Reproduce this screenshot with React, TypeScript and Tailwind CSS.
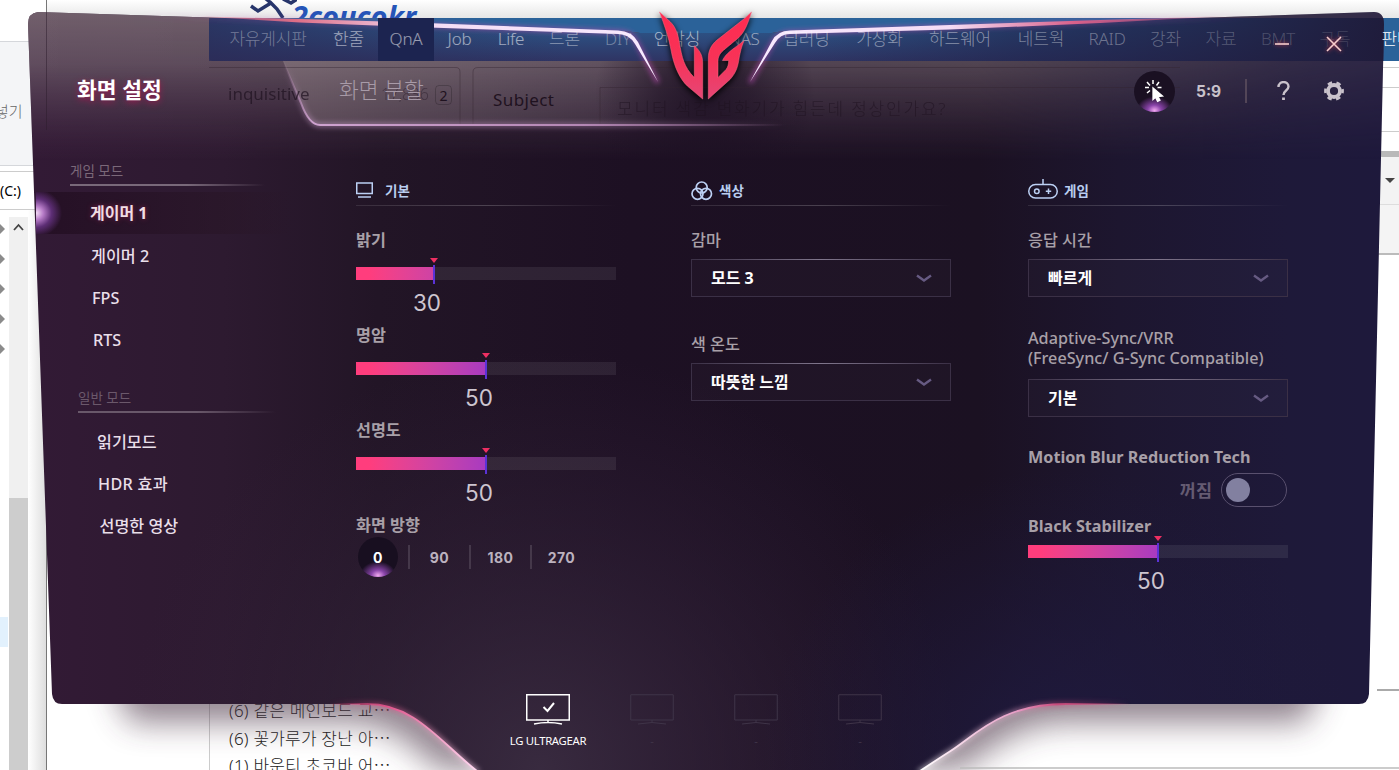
import clsx from 'clsx'
import { ReactNode } from 'react'

const NAV_ITEMS = [
  { label: '자유게시판', className: 'w-[118px] text-white/35' },
  { label: '한줄', className: 'w-[43px] text-white/55' },
  { label: 'QnA', className: 'ml-[8px] w-[56px] bg-[#1c2450] text-white/55' },
  { label: 'Job', className: 'w-[51px] text-white/55' },
  { label: 'Life', className: 'w-[52px] text-white/55' },
  { label: '드론', className: 'w-[55px] text-white/45' },
  { label: 'DIY', className: 'w-[52px] text-white/35' },
  { label: '언박싱', className: 'w-[66px] text-white/60' },
  { label: 'NAS', className: 'w-[68px] text-white/50' },
  { label: '딥러닝', className: 'w-[57px] text-white/45' },
  { label: '가상화', className: 'w-[89px] text-white/45' },
  { label: '하드웨어', className: 'w-[72px] text-white/45' },
  { label: '네트웍', className: 'w-[90px] text-white/40' },
  { label: 'RAID', className: 'w-[42px] text-white/35' },
  { label: '강좌', className: 'w-[75px] text-white/30' },
  { label: '자료', className: 'w-[36px] text-white/25' },
  { label: 'BMT', className: 'w-[78px] text-white/20' },
  { label: '구독', className: 'w-[36px] text-white/15' },
  { label: '판매', className: 'ml-[13px] w-[62px] text-white' },
]

const POSTS = ['(6) 같은 메인보드 교⋯', '(6) 꽃가루가 장난 아⋯', '(1) 바운티 초코바 어⋯']

const PANEL_PATH =
  'M38 12 L209 17.5 L615 31 Q629 31 640 33 L772 33 Q780 31 790 31 L1209 17.5 L1374 12 Q1384 12 1384 24 L1369 694 Q1368 704 1359 704 L1066 704 C1000 704 975 736 949 752 Q935 761 920 771 L477 771 C440 742 415 704 367 704 L62 704 Q53 704 52 694 L28 24 Q28 13 38 12 Z'

function Backdrop() {
  return (
    <>
      <div className="absolute inset-y-0 left-0 w-[46px] overflow-hidden bg-white text-black">
        <div className="h-[41px]" />
        <div className="flex h-[125px] items-center border-y border-[#d5d7db] bg-[#f4f5f7] pt-4 text-[15px] font-light text-[#666]">
          <span className="-ml-[5px]">넣기</span>
        </div>
        <div className="mt-[5px] flex h-[39px] items-center border-y border-[#ccc] text-[14px]">(C:)</div>
        <div className="flex">
          <div className="flex w-[9px] flex-col gap-[20px] pt-[14px]">
            {[1, 2, 3, 4, 5].map((row) => (
              <span key={row} className="h-[10px] w-0 border-y-[5px] border-l-[5px] border-y-transparent border-l-[#8b8b8b]" />
            ))}
          </div>
          <div className="mt-[7px] h-[560px] w-[19px] bg-[#f0f0f0]">
            <svg viewBox="0 0 19 20" className="h-5 w-[19px]" fill="none" stroke="#444" strokeWidth="1.8">
              <path d="M5 13 L9.500 8 L14 13" />
            </svg>
            <div className="mt-[261px] h-[280px] bg-[#cdcdcd]" />
          </div>
          <div className="h-[570px] flex-1 bg-linear-to-r from-white to-[#dedede]" />
        </div>
        <div className="absolute top-[617px] left-0 h-[30px] w-2 bg-[#e2f1fd]" />
      </div>

      <div className="absolute inset-y-0 right-0 left-[46px] overflow-hidden border-l border-[#777] bg-white">
        <div className="relative h-[18px] overflow-hidden bg-linear-to-b from-white to-[#e6e6e6]">
          <svg viewBox="0 0 50 18" className="absolute left-[200px] h-[18px] w-[50px]" fill="none" stroke="#27356b" strokeWidth="3.500">
            <path d="M4 6 L11 11 L24 3 L30 9 L36 18 M18 -2 L24 3 M36 -1 L44 3 L52 -2" />
          </svg>
          <span className="absolute top-[1px] left-[245px] text-[29px] leading-[30px] font-bold text-[#2554b8] italic">
            2coucokr
          </span>
        </div>
        <div className="ml-[162px] h-[43px] rounded-l bg-[#2b6299]" />
        <div className="ml-auto flex w-[22px] flex-col">
          <div className="h-[7px] border-b border-[#ccc]" />
          <div className="h-5 border-b border-[#ccc]" />
          <div className="h-11 border-b border-[#ccc]" />
          <div className="h-[19px]" />
          <div className="h-[6px] bg-[#b9b9b9]" />
          <div className="flex h-[48px] items-center justify-end border-b border-[#ddd] bg-[#f3f3f3] pr-[4px]">
            <span className="w-[10px] border-x-[5px] border-t-[5px] border-x-transparent border-t-[#444]" />
          </div>
          <div className="h-[50px] border-b-2 border-[#bbb] bg-[#f4f4f4]" />
          <div className="h-[434px]" />
          <div className="h-[2px] bg-[#aaa]" />
        </div>
      </div>
    </>
  )
}

function PostList() {
  return (
    <div className="absolute top-[697px] left-[209px] h-[73px] w-[252px] overflow-hidden border-l border-[#ccc] pl-[19px] text-[17px] leading-[27.500px] font-light tracking-[0.2px] whitespace-nowrap text-[#222]">
      {POSTS.map((post) => (
        <p key={post}>{post}</p>
      ))}
    </div>
  )
}

function PanelShadow() {
  return (
    <svg viewBox="0 0 1399 770" className="absolute inset-0 h-full w-full" fill="none">
      <defs>
        <filter id="soft" x="-20%" y="-50%" width="140%" height="200%">
          <feGaussianBlur stdDeviation="16" />
        </filter>
      </defs>
      <path d="M110 670 H400 L500 770 H440 C410 740 390 724 350 722 H130 Z" fill="#4b3446" opacity=".62" filter="url(#soft)" />
      <path d="M1325 670 H1000 L900 770 H960 C1000 740 1020 726 1060 722 H1305 Z" fill="#4b3446" opacity=".62" filter="url(#soft)" />
      <path d="M960 768 H1399" stroke="#bbb" strokeWidth="1.500" />
    </svg>
  )
}

function PanelShape() {
  return (
    <svg viewBox="0 0 1399 770" className="absolute inset-0 h-full w-full" fill="none">
      <defs>
        <linearGradient id="base">
          <stop offset="0" stopColor="#331a36" />
          <stop offset=".16" stopColor="#2d1a30" />
          <stop offset=".27" stopColor="#221526" />
          <stop offset=".45" stopColor="#1d1023" />
          <stop offset=".7" stopColor="#1b1122" />
          <stop offset=".8" stopColor="#1d162f" />
          <stop offset=".92" stopColor="#1e1939" />
          <stop offset="1" stopColor="#1e193c" />
        </linearGradient>
        <linearGradient id="haze" x1="0" y1="12" x2="0" y2="160" gradientUnits="userSpaceOnUse">
          <stop offset="0" stopColor="#84747c" stopOpacity=".78" />
          <stop offset=".35" stopColor="#82727c" stopOpacity=".58" />
          <stop offset=".7" stopColor="#705a6c" stopOpacity=".27" />
          <stop offset="1" stopColor="#5a3c57" stopOpacity="0" />
        </linearGradient>
        <linearGradient id="fade-x">
          <stop offset="0" stopColor="#fff" />
          <stop offset=".7" stopColor="#fff" stopOpacity=".9" />
          <stop offset=".92" stopColor="#fff" stopOpacity=".35" />
          <stop offset="1" stopColor="#fff" stopOpacity=".25" />
        </linearGradient>
        <mask id="haze-mask">
          <rect width="1399" height="770" fill="url(#fade-x)" />
        </mask>
        <radialGradient id="notch-shade" cx="705" cy="95" r="110" gradientUnits="userSpaceOnUse">
          <stop offset="0" stopColor="#1d1023" stopOpacity=".85" />
          <stop offset=".4" stopColor="#1d1023" stopOpacity=".6" />
          <stop offset="1" stopColor="#1d1023" stopOpacity="0" />
        </radialGradient>
        <radialGradient id="floor" cx="540" cy="770" r="420" gradientUnits="userSpaceOnUse">
          <stop offset="0" stopColor="#3b2d42" stopOpacity=".9" />
          <stop offset="1" stopColor="#33203a" stopOpacity="0" />
        </radialGradient>
        <radialGradient id="floor-right" cx="1060" cy="770" r="300" gradientUnits="userSpaceOnUse">
          <stop offset="0" stopColor="#1f1a3f" />
          <stop offset="1" stopColor="#1f1a3f" stopOpacity="0" />
        </radialGradient>
        <linearGradient id="nav" x1="0" y1="18" x2="0" y2="61" gradientUnits="userSpaceOnUse">
          <stop offset="0" stopColor="#2b5f93" />
          <stop offset="1" stopColor="#2f3463" />
        </linearGradient>
        <linearGradient id="nav-shade">
          <stop offset="0" stopColor="#2a2a55" stopOpacity=".75" />
          <stop offset=".3" stopColor="#2a2a55" stopOpacity="0" />
          <stop offset=".5" stopColor="#1f234a" stopOpacity="0" />
          <stop offset=".7" stopColor="#1f234a" stopOpacity=".65" />
          <stop offset="1" stopColor="#1f1b3a" />
        </linearGradient>
        <linearGradient id="tab" x1="283" y1="0" x2="800" y2="0" gradientUnits="userSpaceOnUse">
          <stop offset="0" stopColor="#b0a0a0" stopOpacity=".34" />
          <stop offset=".6" stopColor="#b0a0a8" stopOpacity=".14" />
          <stop offset="1" stopColor="#b09aa8" stopOpacity="0" />
        </linearGradient>
        <linearGradient id="tab-line" x1="283" y1="61" x2="785" y2="61" gradientUnits="userSpaceOnUse">
          <stop offset="0" stopColor="#c79ac6" stopOpacity="0" />
          <stop offset=".06" stopColor="#cfa3d0" />
          <stop offset=".6" stopColor="#b487b4" />
          <stop offset="1" stopColor="#b487b4" stopOpacity="0" />
        </linearGradient>
        <linearGradient id="edge-left" x1="140" y1="0" x2="660" y2="0" gradientUnits="userSpaceOnUse">
          <stop offset="0" stopColor="#e0648a" stopOpacity="0" />
          <stop offset=".3" stopColor="#dd6e86" />
          <stop offset=".55" stopColor="#f4dcf5" />
          <stop offset="1" stopColor="#f7eaff" />
        </linearGradient>
        <linearGradient id="edge-right" x1="750" y1="0" x2="1250" y2="0" gradientUnits="userSpaceOnUse">
          <stop offset="0" stopColor="#f7eaff" />
          <stop offset=".4" stopColor="#f4dcf5" />
          <stop offset=".65" stopColor="#d9608a" />
          <stop offset="1" stopColor="#d9608a" stopOpacity="0" />
        </linearGradient>
        <linearGradient id="edge-glow" x1="140" y1="0" x2="1250" y2="0" gradientUnits="userSpaceOnUse">
          <stop offset="0" stopColor="#b04aa8" stopOpacity="0" />
          <stop offset=".3" stopColor="#b04aa8" stopOpacity=".6" />
          <stop offset=".75" stopColor="#b04aa8" stopOpacity=".6" />
          <stop offset="1" stopColor="#b04aa8" stopOpacity="0" />
        </linearGradient>
        <linearGradient id="curve-left" x1="330" y1="0" x2="477" y2="0" gradientUnits="userSpaceOnUse">
          <stop offset="0" stopColor="#d8326e" stopOpacity="0" />
          <stop offset=".4" stopColor="#e0568c" />
          <stop offset="1" stopColor="#ffd9f2" />
        </linearGradient>
        <linearGradient id="curve-right" x1="920" y1="0" x2="1130" y2="0" gradientUnits="userSpaceOnUse">
          <stop offset="0" stopColor="#fff" />
          <stop offset=".45" stopColor="#e8a0c8" />
          <stop offset=".65" stopColor="#c94b7c" />
          <stop offset="1" stopColor="#c94b7c" stopOpacity="0" />
        </linearGradient>
        <filter id="glow" x="-10%" y="-60%" width="120%" height="220%">
          <feGaussianBlur stdDeviation="2.500" />
        </filter>
        <clipPath id="panel-clip">
          <path d={PANEL_PATH} />
        </clipPath>
      </defs>

      <g clipPath="url(#panel-clip)">
        <rect width="1399" height="770" fill="url(#base)" />
        <rect width="1399" height="770" fill="url(#floor)" />
        <rect width="1399" height="770" fill="url(#floor-right)" />
        <rect width="1399" height="200" fill="url(#haze)" mask="url(#haze-mask)" />
        <path d="M46.500 0 V130" stroke="#2b1c2b" strokeOpacity=".5" />
        <path d="M283 61 L301 103 Q309 125 320 125 H800 V61 Z" fill="url(#tab)" />
        <rect x="560" y="61" width="300" height="150" fill="url(#notch-shade)" />
        <path d="M213 18 H1399 V61 H213 Q209 61 209 57 V22 Q209 18 213 18" fill="url(#nav)" />
        <rect x="209" y="18" width="1190" height="43" fill="url(#nav-shade)" />
        <path d="M209 67.500 H455 Q460 67 460 72 V124 M473 124 V72 Q473 67.500 478 67.500 H1180 M600 124 V87.500 H1180" stroke="#33222f" strokeOpacity=".4" />
      </g>

      <g strokeLinecap="round">
        <path d="M283 61 L301 103 Q309 125 320 125 L785 125.010" stroke="url(#tab-line)" strokeWidth="5" opacity=".5" filter="url(#glow)" />
        <path d="M283 61 L301 103 Q309 125 320 125 L785 125.010" stroke="url(#tab-line)" strokeWidth="2" />
        <path d="M140 15.500 L620 32 Q631 32 636 41 L657 81" stroke="url(#edge-glow)" strokeWidth="5" filter="url(#glow)" />
        <path d="M200 16.500 L300 19 L400 22 L618 30.500 Q632 31 638 42 L658 82 L635 44 Q629 34 618 34 L400 26.500 L300 22.500 Z" fill="url(#edge-left)" />
        <path d="M1250 16.500 L790 32.500 Q779 33 773 42 L751 81" stroke="url(#edge-glow)" strokeWidth="5" filter="url(#glow)" />
        <path d="M1230 16 L1100 20 L950 25 L790 30.500 Q777 31 772 41 L750 82 L775 43 Q780 34 790 34 L950 29.500 L1100 23 Z" fill="url(#edge-right)" />
        <path d="M330 704 L367 704 C415 704 440 742 477 771" stroke="url(#curve-left)" strokeWidth="5" opacity=".5" filter="url(#glow)" />
        <path d="M330 703.990 L367 704 C415 704 440 742 477 771" stroke="url(#curve-left)" strokeWidth="1.800" />
        <path d="M1130 704 L1066 704 C1000 704 975 736 949 752 Q935 761 920 771" stroke="url(#curve-right)" strokeWidth="5" opacity=".5" filter="url(#glow)" />
        <path d="M1130 703.990 L1066 704 C1000 704 975 736 949 752 Q935 761 920 771" stroke="url(#curve-right)" strokeWidth="1.800" />
      </g>
    </svg>
  )
}

function PageBehind() {
  return (
    <div className="absolute top-[18px] left-[209px] w-[1190px] overflow-hidden font-light whitespace-nowrap">
      <nav className="flex h-[43px] text-[17px] leading-[41px]">
        {NAV_ITEMS.map((item) => (
          <span key={item.label} className={clsx('flex h-full shrink-0 justify-center tracking-[-0.2px]', item.className)}>
            {item.label}
          </span>
        ))}
      </nav>
      <div className="flex h-[95px] pt-[21px] pl-[19px] text-[17px] text-[#1f1220]">
        <span className="w-[153px] leading-6 font-normal opacity-70">inquisitive</span>
        <span className="w-[54px] text-[16px] leading-6 tracking-[-0.3px] opacity-40">17,836</span>
        <span className="mt-[3px] h-5 w-[17px] rounded border border-black/20 text-center text-[14px] leading-[19px] font-normal">2</span>
        <span className="ml-[41px] w-[124px] pt-[4px] leading-7 font-normal tracking-[0.4px]">Subject</span>
        <span className="pt-[13px] leading-7 tracking-[1.800px] opacity-60">모니터 색감 변화기가 힘든데 정상인가요?</span>
      </div>
    </div>
  )
}

function UltraGearLogo() {
  return (
    <svg viewBox="0 0 96 96" className="absolute top-[10px] left-[657px] h-24 w-24 drop-shadow-[0_2px_3px_#000]">
      <defs>
        <linearGradient id="logo" x1="0" y1="0" x2="0" y2="96" gradientUnits="userSpaceOnUse">
          <stop offset="0" stopColor="#ff2b50" />
          <stop offset=".5" stopColor="#f83257" />
          <stop offset="1" stopColor="#e24a7c" />
        </linearGradient>
      </defs>
      <g fill="url(#logo)" stroke="#ff6d86" strokeWidth=".5">
        <path d="M2.500 2 L13 11.500 C19 17 21 25 22.300 32 C25 48 27 57 37.300 67.500 L37.300 35.700 C42 40 45.700 44 45.700 53 L45.700 89 L30.300 76 C23 69 17 57 14 40 C12 28 7 14 2.500 2 Z" />
        <path d="M94.500 2 C91 13 88 22 81.300 28 L66.300 40.500 C62.500 44 61 47 61 51.700 L61 67.500 L69 59.500 C71 57 71.500 54 71.700 50.500 L65.500 50.500 C69 43 75 40 87 30.700 C84 38 83.500 42 82.300 47 C81 56 79.700 62 73 69.500 L51.300 89 L51.300 48 C51.300 41 54 35 60 30 L88.700 7.500 Z" />
      </g>
    </svg>
  )
}

function SectionTitle({ icon, children }: { icon: ReactNode; children: ReactNode }) {
  return (
    <div className="flex h-[26px] flex-col">
      <div className="flex h-[25px] items-center pb-[4px] text-[13.500px] leading-5 font-bold text-[#b9cdf0]">
        {icon}
        <span className="pt-px">{children}</span>
      </div>
      <div className="h-px shrink-0 bg-linear-to-r from-white/10 via-white/20 to-transparent" />
    </div>
  )
}

function Slider({ value }: { value: number }) {
  return (
    <div className="w-[260px]">
      <div className="relative h-[13px] bg-white/[0.075]">
        <div className="h-full overflow-hidden" style={{ width: `${value}%` }}>
          <div className="h-full w-[260px] bg-linear-to-r from-[#ff3d7d] from-5% via-[#a83ac0] via-50% to-[#6a30e0]" />
        </div>
        <div className="absolute -top-[9px] flex w-[10px] -translate-x-1/2 flex-col items-center" style={{ left: `${value}%` }}>
          <span className="border-x-[4px] border-t-[5px] border-x-transparent border-t-[#ee2f62]" />
          <span className="mt-[2px] h-[19px] w-[2px] bg-[#5b32d6]" />
        </div>
      </div>
      <div className="mt-[12px] h-[22px] w-0" style={{ marginLeft: `${value * 2.6 - 7}px` }}>
        <span className="flex -translate-x-1/2 justify-center font-['Inter','Liberation_Sans',sans-serif] text-[22.500px] leading-[22px] text-[#cdc5d0]">
          {value}
        </span>
      </div>
    </div>
  )
}

function Label({ children, className = 'font-medium' }: { children: ReactNode; className?: string }) {
  return <p className={clsx('h-5 text-[16.200px] leading-5 whitespace-nowrap text-[#a8a0a8]', className)}>{children}</p>
}

function Select({ value }: { value: string }) {
  return (
    <div className="flex h-[38px] w-[260px] flex-col border border-t-0 border-[#3b3046] bg-white/[0.02]">
      <div className="h-px bg-linear-to-r from-[#3b3046] via-[#80768c] to-[#3b3046]" />
      <div className="flex flex-1 items-center justify-between pr-[18px] pl-[19px] text-[16px] font-bold text-white">
        {value}
        <svg viewBox="0 0 16 9" className="h-[9px] w-4" fill="none" stroke="#665a82" strokeWidth="2.400">
          <path d="M1 1.500 L8 6.500 L15 1.500" />
        </svg>
      </div>
    </div>
  )
}

function MenuItem({ children, className }: { children: ReactNode; className: string }) {
  return (
    <div className={clsx('flex h-[42px] items-center text-[16.200px] font-medium text-[#e9dfe9]', className)}>{children}</div>
  )
}

function Sidebar() {
  return (
    <aside className="w-[320px] shrink-0 pt-[4px]">
      <p className="ml-[34px] h-[20px] text-[13.500px] leading-[20px] text-[#7b6879]">게임 모드</p>
      <div className="mt-[3px] ml-[34px] h-[2px] w-[195px] bg-linear-to-r from-[#79697a] from-60% to-transparent" />
      <div className="mt-[6px]">
        <div className="flex h-[42px] items-center bg-[radial-gradient(ellipse_26px_24px_at_0_50%,#f4dcf6_0%,#b77cc8_28%,#5d2e75_60%,transparent_100%),linear-gradient(to_right,#251025,#28152580_60%,transparent_80%)] pl-[54px] text-[16px] font-bold text-[#f0dde4] [text-shadow:0_0_5px_#802045]">
          게이머 1
        </div>
        <div className="pt-px">
          <MenuItem className="pl-[55px]">게이머 2</MenuItem>
          <MenuItem className="pl-[56px]">FPS</MenuItem>
          <MenuItem className="pl-[57px]">RTS</MenuItem>
        </div>
      </div>
      <p className="mt-[27px] ml-[42px] h-[20px] text-[13.500px] leading-[20px] text-[#6b586b]">일반 모드</p>
      <div className="mt-[3px] ml-[42px] h-[2px] w-[198px] bg-linear-to-r from-[#69586a] from-60% to-transparent" />
      <div className="mt-[8px]">
        <MenuItem className="pl-[61px]">읽기모드</MenuItem>
        <MenuItem className="pl-[62px] tracking-[0.3px]">HDR 효과</MenuItem>
        <MenuItem className="pl-[63.500px]">선명한 영상</MenuItem>
      </div>
    </aside>
  )
}

function BasicSection() {
  return (
    <section className="w-[260px]">
      <SectionTitle
        icon={
          <svg viewBox="0 0 18 18" className="mr-[11px] mb-px h-[18px] w-[18px]" fill="none" stroke="#bcd0f4" strokeWidth="1.500">
            <path d="M.750 2 H16.250 V12.500 H.750 Z M2 16 H15" />
          </svg>
        }
      >
        기본
      </SectionTitle>
      <div className="mt-[24px] flex flex-col gap-[11px]">
        {[
          { name: '밝기', value: 30 },
          { name: '명암', value: 50 },
          { name: '선명도', value: 50 },
        ].map(({ name, value }) => (
          <div key={name}>
            <Label className="mb-[17px] font-bold">{name}</Label>
            <Slider value={value} />
          </div>
        ))}
        <div>
          <Label className="font-bold">화면 방향</Label>
          <div className="mt-[2px] flex h-10 items-center font-['Inter','Liberation_Sans',sans-serif] text-[14px] font-bold tracking-[0.4px] text-[#bcb2bf]">
            <div className="w-[52px] pl-[2px]">
              <span className="flex h-10 w-10 items-center justify-center rounded-full bg-[#180f20] bg-[radial-gradient(ellipse_18px_14px_at_50%_96%,#f0a8f0_0%,#8843a8_38%,transparent_100%)] text-white">
                0
              </span>
            </div>
            {['90', '180', '270'].map((angle) => (
              <span key={angle} className="flex h-6 w-[61px] items-center justify-center border-l-2 border-[#45384a]">
                {angle}
              </span>
            ))}
          </div>
        </div>
      </div>
    </section>
  )
}

function ColorSection() {
  return (
    <section className="ml-[75px] w-[260px]">
      <SectionTitle
        icon={
          <svg viewBox="0 0 22 20" className="mr-[6px] h-5 w-[22px]" fill="none" stroke="#bcd0f4" strokeWidth="1.700">
            <circle cx="10.700" cy="6.500" r="5.500" />
            <circle cx="6.500" cy="12.800" r="5.500" />
            <circle cx="15" cy="12.800" r="5.500" />
          </svg>
        }
      >
        색상
      </SectionTitle>
      <Label className="mt-[24px] mb-[9px] font-medium">감마</Label>
      <Select value="모드 3" />
      <Label className="mt-[37px] mb-[9px] font-medium">색 온도</Label>
      <Select value="따뜻한 느낌" />
    </section>
  )
}

function GameSection() {
  return (
    <section className="ml-[77px] w-[260px]">
      <SectionTitle
        icon={
          <svg viewBox="0 0 30 20" className="mr-[6px] mb-[3px] h-5 w-[30px]" fill="none" stroke="#bcd0f4" strokeWidth="1.500">
            <rect x=".750" y="5.500" width="28.500" height="13.500" rx="6.700" />
            <path d="M15 0 V5.500 M20.500 9.500 V15 M17.800 12.200 H23.200" />
            <circle cx="8.800" cy="12.200" r="2.300" />
          </svg>
        }
      >
        게임
      </SectionTitle>
      <Label className="mt-[24px] mb-[9px] font-medium">응답 시간</Label>
      <Select value="빠르게" />
      <Label className="mt-[31px] font-medium">Adaptive-Sync/VRR</Label>
      <Label className="mb-[11px] font-medium">(FreeSync/ G-Sync Compatible)</Label>
      <Select value="기본" />
      <Label className="mt-[30px] font-bold">Motion Blur Reduction Tech</Label>
      <div className="mt-[6px] flex h-[34px] items-center justify-end gap-[9px] pr-px">
        <span className="text-[17.500px] font-bold text-[#655b72]">꺼짐</span>
        <span className="flex h-[34px] w-[66px] items-center rounded-full border border-[#59506e] pl-1">
          <span className="h-6 w-6 rounded-full bg-[#8280a0]" />
        </span>
      </div>
      <Label className="mt-[9px] mb-[9px] font-bold">Black Stabilizer</Label>
      <Slider value={50} />
    </section>
  )
}

function Toolbar() {
  return (
    <div className="flex items-center text-[#c9c2cb]">
      <span className="flex h-[41px] w-[41px] items-center justify-center rounded-full bg-[#1a1022] bg-[radial-gradient(ellipse_18px_14px_at_50%_96%,#f0a8f0_0%,#8843a8_38%,transparent_100%)]">
        <svg viewBox="0 0 22 24" className="h-6 w-[22px]" fill="#fff" stroke="#fff" strokeWidth="1.500">
          <path d="M9 1 V5 M3 3 L6 6.500 M15 3 L12.500 6.500 M1 8.500 H5 M3 14 L6 11.500 M13.500 8.500 H17.500" />
          <path d="M9 9 L9 20.500 L11.500 18.200 L13.600 22.500 L16 21.300 L14 17.500 L18.500 17 Z" strokeWidth="1.300" />
        </svg>
      </span>
      <span className="ml-[21px] w-[27px] pt-px font-['Inter','Liberation_Sans',sans-serif] text-[15.500px] font-bold whitespace-nowrap">5:9</span>
      <span className="ml-[22px] h-6 w-[2px] bg-[#534658]" />
      <svg viewBox="0 0 13 20" className="ml-[30px] h-5 w-[13px]" fill="none" stroke="currentColor" strokeWidth="2.400">
        <path d="M1.500 6 C1.500 -.500 11.500 -.500 11.500 5.500 C11.500 9.500 6.500 9.500 6.500 14" />
        <path d="M6.500 16.500 V19" strokeWidth="2.800" />
      </svg>
      <svg viewBox="0 0 20 20" className="ml-[34px] h-5 w-5" fill="none" stroke="currentColor">
        <circle cx="10" cy="10" r="6" strokeWidth="3.800" />
        <circle cx="10" cy="10" r="8.600" strokeWidth="2.600" strokeDasharray="4.503 4.503" strokeDashoffset="2.250" />
      </svg>
    </div>
  )
}

function Monitor({ active = false }: { active?: boolean }) {
  return (
    <div className={clsx('flex w-[104px] flex-col items-center', active ? 'text-white' : 'text-[#3f3448]')}>
      <svg viewBox="0 0 44 31" className="h-[31px] w-11" fill="none" stroke="currentColor" strokeWidth={active ? 1.5 : 1}>
        <path d="M.750 .750 H43.250 V26 H.750 Z M22 26 V28.500 M8 30 Q22 27 36 30" />
        {active && <path d="M17.500 13 L21.500 17 L28 9" strokeWidth="2" />}
      </svg>
      <span className="mt-[7px] text-[11.300px] leading-[18px] tracking-[-0.3px]">{active ? 'LG ULTRAGEAR' : '-'}</span>
    </div>
  )
}

export default function App() {
  return (
    <div className="relative h-[770px] w-[1399px] overflow-hidden bg-white font-['Noto_Sans','Noto_Sans_CJK_KR',sans-serif]">
      <Backdrop />
      <PostList />
      <PanelShadow />
      <PanelShape />
      <PageBehind />
      <UltraGearLogo />

      <main className="absolute inset-0 flex flex-col">
        <div className="flex h-[64px] items-end justify-end gap-[37px] pr-[57px] pb-[12px]">
          <svg viewBox="0 0 14 16" className="h-4 w-[14px] drop-shadow-[0_0_2px_#d04050]" stroke="#f6cccc" strokeWidth="1.600">
            <path d="M0 8 H14" />
          </svg>
          <svg viewBox="0 0 16 16" className="h-4 w-4 drop-shadow-[0_0_2px_#d04050]" stroke="#f6cccc" strokeWidth="1.600">
            <path d="M1 1 L15 15 M15 1 L1 15" />
          </svg>
        </div>
        <header className="flex h-[54px] items-center justify-between pr-[55px] pl-[77px]">
          <div className="flex items-center pb-[2px] text-[21.500px]">
            <span className="w-[262px] font-bold text-white [text-shadow:0_2px_6px_#a01850]">화면 설정</span>
            <span className="font-light text-[#a89ba8]">화면 분할</span>
          </div>
          <Toolbar />
        </header>
        <div className="mt-[39px] flex h-[533px] pl-[36px]">
          <Sidebar />
          <div className="flex pt-[23px]">
            <BasicSection />
            <ColorSection />
            <GameSection />
          </div>
        </div>
        <footer className="flex pt-[4px] pl-[496px]">
          <Monitor active />
          <Monitor />
          <Monitor />
          <Monitor />
        </footer>
      </main>
    </div>
  )
}
